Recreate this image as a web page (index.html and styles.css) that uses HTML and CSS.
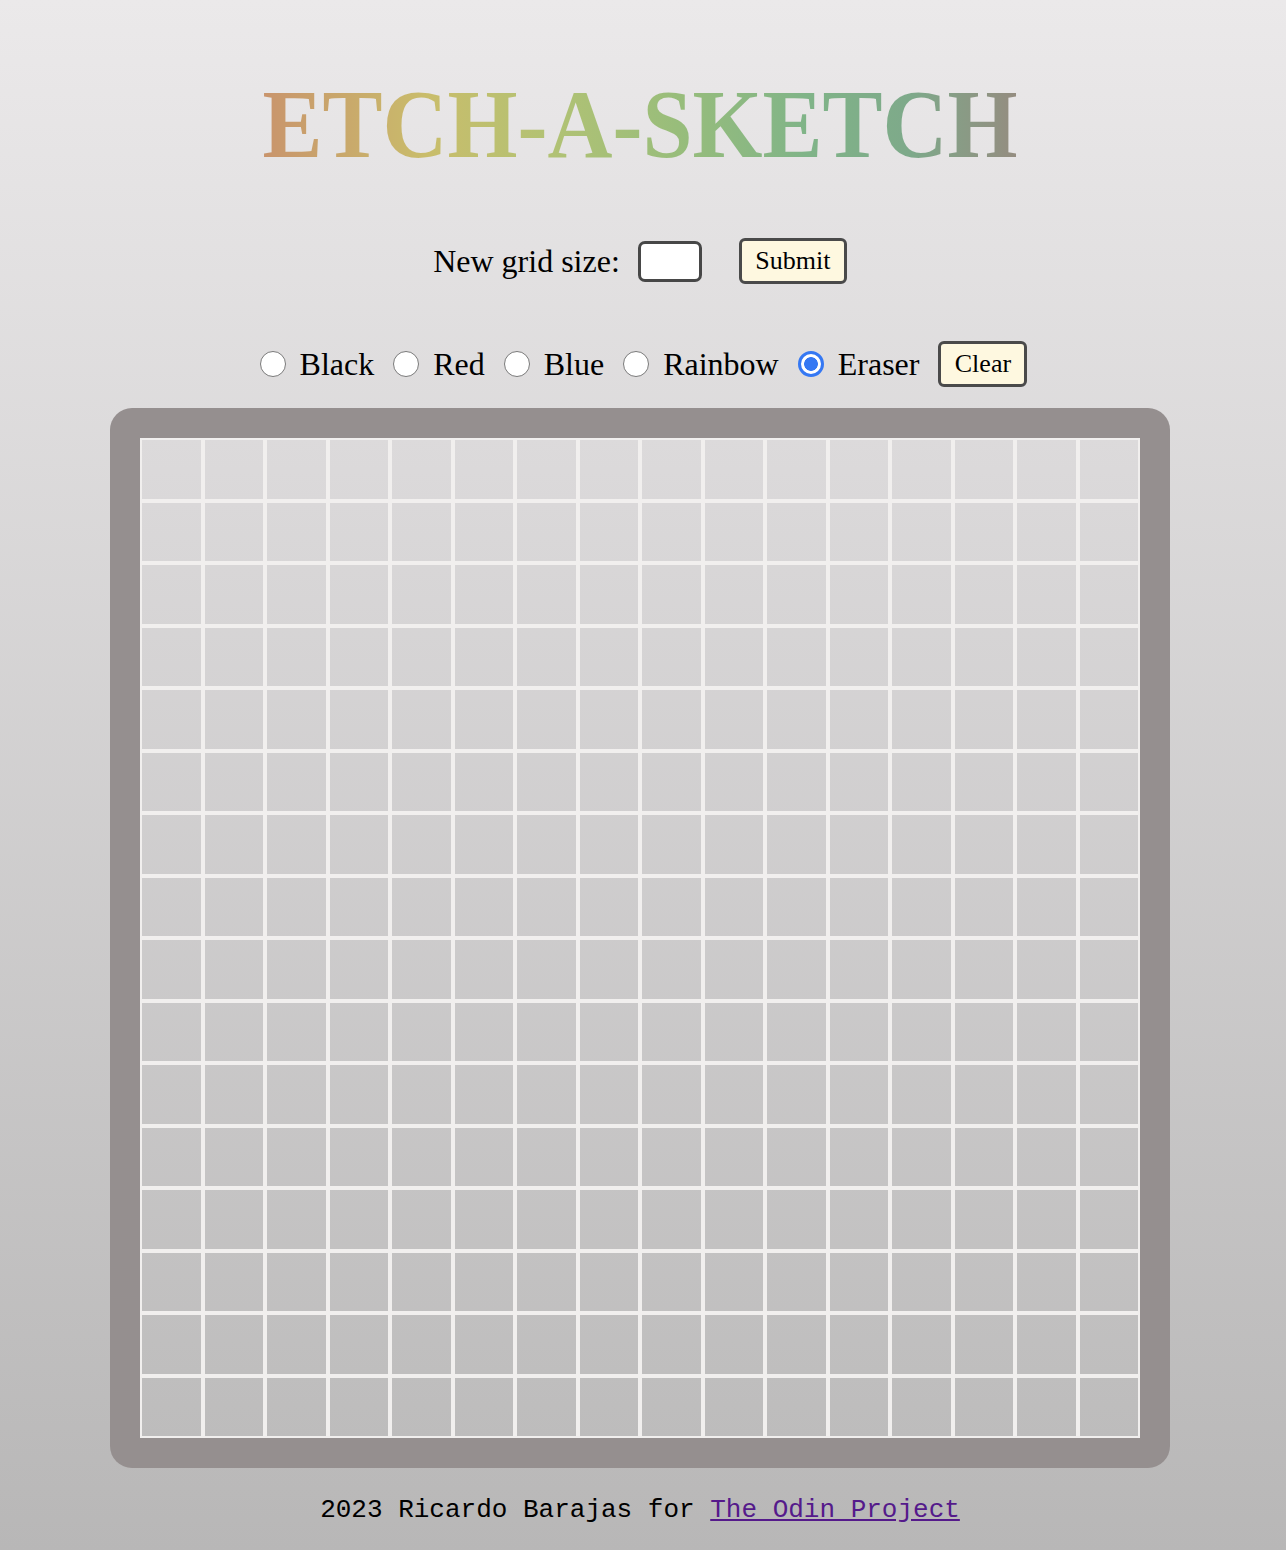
FILE: index.html
```html
<!DOCTYPE html>
<html lang="en">
<head>
<meta charset="utf-8">
<title>Etch-a-Sketch</title>
<link rel="stylesheet" href="styles.css">
</head>
<body>
<main class="page">
  <h1 class="title"><span class="title-text">ETCH-A-SKETCH</span></h1>

  <form class="size-row">
    <label class="size-label" for="size">New grid size:</label>
    <input class="size-input" id="size" type="text">
    <button class="btn submit-btn" type="button">Submit</button>
  </form>

  <div class="mode-row">
    <label class="mode"><input class="radio" type="radio" name="mode"><span>Black</span></label>
    <label class="mode"><input class="radio" type="radio" name="mode"><span>Red</span></label>
    <label class="mode"><input class="radio" type="radio" name="mode"><span>Blue</span></label>
    <label class="mode"><input class="radio" type="radio" name="mode"><span>Rainbow</span></label>
    <label class="mode"><input class="radio" type="radio" name="mode" checked><span>Eraser</span></label>
    <button class="btn clear-btn" type="button">Clear</button>
  </div>

  <div class="board">
    <div class="grid">
      <div class="cell"></div><div class="cell"></div><div class="cell"></div><div class="cell"></div><div class="cell"></div><div class="cell"></div><div class="cell"></div><div class="cell"></div><div class="cell"></div><div class="cell"></div><div class="cell"></div><div class="cell"></div><div class="cell"></div><div class="cell"></div><div class="cell"></div><div class="cell"></div>
      <div class="cell"></div><div class="cell"></div><div class="cell"></div><div class="cell"></div><div class="cell"></div><div class="cell"></div><div class="cell"></div><div class="cell"></div><div class="cell"></div><div class="cell"></div><div class="cell"></div><div class="cell"></div><div class="cell"></div><div class="cell"></div><div class="cell"></div><div class="cell"></div>
      <div class="cell"></div><div class="cell"></div><div class="cell"></div><div class="cell"></div><div class="cell"></div><div class="cell"></div><div class="cell"></div><div class="cell"></div><div class="cell"></div><div class="cell"></div><div class="cell"></div><div class="cell"></div><div class="cell"></div><div class="cell"></div><div class="cell"></div><div class="cell"></div>
      <div class="cell"></div><div class="cell"></div><div class="cell"></div><div class="cell"></div><div class="cell"></div><div class="cell"></div><div class="cell"></div><div class="cell"></div><div class="cell"></div><div class="cell"></div><div class="cell"></div><div class="cell"></div><div class="cell"></div><div class="cell"></div><div class="cell"></div><div class="cell"></div>
      <div class="cell"></div><div class="cell"></div><div class="cell"></div><div class="cell"></div><div class="cell"></div><div class="cell"></div><div class="cell"></div><div class="cell"></div><div class="cell"></div><div class="cell"></div><div class="cell"></div><div class="cell"></div><div class="cell"></div><div class="cell"></div><div class="cell"></div><div class="cell"></div>
      <div class="cell"></div><div class="cell"></div><div class="cell"></div><div class="cell"></div><div class="cell"></div><div class="cell"></div><div class="cell"></div><div class="cell"></div><div class="cell"></div><div class="cell"></div><div class="cell"></div><div class="cell"></div><div class="cell"></div><div class="cell"></div><div class="cell"></div><div class="cell"></div>
      <div class="cell"></div><div class="cell"></div><div class="cell"></div><div class="cell"></div><div class="cell"></div><div class="cell"></div><div class="cell"></div><div class="cell"></div><div class="cell"></div><div class="cell"></div><div class="cell"></div><div class="cell"></div><div class="cell"></div><div class="cell"></div><div class="cell"></div><div class="cell"></div>
      <div class="cell"></div><div class="cell"></div><div class="cell"></div><div class="cell"></div><div class="cell"></div><div class="cell"></div><div class="cell"></div><div class="cell"></div><div class="cell"></div><div class="cell"></div><div class="cell"></div><div class="cell"></div><div class="cell"></div><div class="cell"></div><div class="cell"></div><div class="cell"></div>
      <div class="cell"></div><div class="cell"></div><div class="cell"></div><div class="cell"></div><div class="cell"></div><div class="cell"></div><div class="cell"></div><div class="cell"></div><div class="cell"></div><div class="cell"></div><div class="cell"></div><div class="cell"></div><div class="cell"></div><div class="cell"></div><div class="cell"></div><div class="cell"></div>
      <div class="cell"></div><div class="cell"></div><div class="cell"></div><div class="cell"></div><div class="cell"></div><div class="cell"></div><div class="cell"></div><div class="cell"></div><div class="cell"></div><div class="cell"></div><div class="cell"></div><div class="cell"></div><div class="cell"></div><div class="cell"></div><div class="cell"></div><div class="cell"></div>
      <div class="cell"></div><div class="cell"></div><div class="cell"></div><div class="cell"></div><div class="cell"></div><div class="cell"></div><div class="cell"></div><div class="cell"></div><div class="cell"></div><div class="cell"></div><div class="cell"></div><div class="cell"></div><div class="cell"></div><div class="cell"></div><div class="cell"></div><div class="cell"></div>
      <div class="cell"></div><div class="cell"></div><div class="cell"></div><div class="cell"></div><div class="cell"></div><div class="cell"></div><div class="cell"></div><div class="cell"></div><div class="cell"></div><div class="cell"></div><div class="cell"></div><div class="cell"></div><div class="cell"></div><div class="cell"></div><div class="cell"></div><div class="cell"></div>
      <div class="cell"></div><div class="cell"></div><div class="cell"></div><div class="cell"></div><div class="cell"></div><div class="cell"></div><div class="cell"></div><div class="cell"></div><div class="cell"></div><div class="cell"></div><div class="cell"></div><div class="cell"></div><div class="cell"></div><div class="cell"></div><div class="cell"></div><div class="cell"></div>
      <div class="cell"></div><div class="cell"></div><div class="cell"></div><div class="cell"></div><div class="cell"></div><div class="cell"></div><div class="cell"></div><div class="cell"></div><div class="cell"></div><div class="cell"></div><div class="cell"></div><div class="cell"></div><div class="cell"></div><div class="cell"></div><div class="cell"></div><div class="cell"></div>
      <div class="cell"></div><div class="cell"></div><div class="cell"></div><div class="cell"></div><div class="cell"></div><div class="cell"></div><div class="cell"></div><div class="cell"></div><div class="cell"></div><div class="cell"></div><div class="cell"></div><div class="cell"></div><div class="cell"></div><div class="cell"></div><div class="cell"></div><div class="cell"></div>
      <div class="cell"></div><div class="cell"></div><div class="cell"></div><div class="cell"></div><div class="cell"></div><div class="cell"></div><div class="cell"></div><div class="cell"></div><div class="cell"></div><div class="cell"></div><div class="cell"></div><div class="cell"></div><div class="cell"></div><div class="cell"></div><div class="cell"></div><div class="cell"></div>
    </div>
  </div>

  <footer class="footer">2023 Ricardo Barajas for <a class="footer-link" href="#">The Odin Project</a></footer>
</main>
</body>
</html>
```

FILE: styles.css
```css
html, body {
  margin: 0;
  padding: 0;
}

body {
  min-height: 1550px;
  background: linear-gradient(to bottom, #ebe9ea 0, #b8b7b7 1550px);
  font-family: "Liberation Serif", "Times New Roman", serif;
  color: #000;
}

.page {
  display: flex;
  flex-direction: column;
  align-items: center;
  padding: 75px 6px 0 0;
}

.title {
  margin: 0;
  height: 100px;
  font-size: 90px;
  line-height: 100px;
  font-weight: bold;
  transform: scaleY(1.07);
}

.title-text {
  display: inline-block;
  background: linear-gradient(to right, #c9946c 0%, #c9bd6b 22%, #b2c274 38%, #98bd7b 55%, #80b488 72%, #7ea98a 86%, #958c80 100%);
  -webkit-background-clip: text;
  background-clip: text;
  color: transparent;
}

.size-row {
  margin: 63px 0 0 0;
  display: flex;
  align-items: center;
  height: 46px;
}

.size-label {
  font-size: 32px;
}

.size-input {
  box-sizing: border-box;
  width: 64px;
  height: 41px;
  margin: 0 0 0 18px;
  border: 3px solid #474747;
  border-radius: 7px;
  background: #fff;
  padding: 0 4px;
  font-size: 20px;
}

.btn {
  box-sizing: border-box;
  height: 46px;
  padding: 0 13px;
  border: 3px solid #4a4a4a;
  border-radius: 6px;
  background: #fef8e0;
  font-family: "Liberation Serif", "Times New Roman", serif;
  font-size: 26px;
  color: #000;
}

.submit-btn {
  margin-left: 37px;
  width: 108px;
}

.mode-row {
  margin-top: 57px;
  display: flex;
  align-items: center;
  gap: 19px;
  height: 46px;
  padding-left: 7px;
}

.mode {
  display: flex;
  align-items: center;
  gap: 14px;
  font-size: 32px;
}

.radio {
  -webkit-appearance: none;
  appearance: none;
  box-sizing: border-box;
  width: 26px;
  height: 26px;
  margin: 0;
  border: 1.5px solid #7a7a7a;
  border-radius: 50%;
  background: #fff;
}

.radio:checked {
  border: 3px solid #3578f3;
  background: radial-gradient(circle, #3578f3 0 6.5px, #fff 7.2px);
}

.clear-btn {
  width: 89px;
}

.board {
  margin-top: 21px;
  box-sizing: border-box;
  width: 1060px;
  height: 1060px;
  padding: 30px;
  background: #958f8f;
  border-radius: 22px;
}

.grid {
  width: 1000px;
  height: 1000px;
  display: grid;
  grid-template-columns: repeat(16, 1fr);
  grid-template-rows: repeat(16, 1fr);
  background: linear-gradient(to bottom, #dcdadb, #bdbcbc);
}

.cell {
  box-sizing: border-box;
  border: 2px solid #f1efee;
}

.footer {
  margin-top: 27px;
  font-family: "Liberation Mono", "Courier New", monospace;
  font-size: 26px;
  line-height: 30px;
}

.footer-link {
  color: #551a8b;
}
```
